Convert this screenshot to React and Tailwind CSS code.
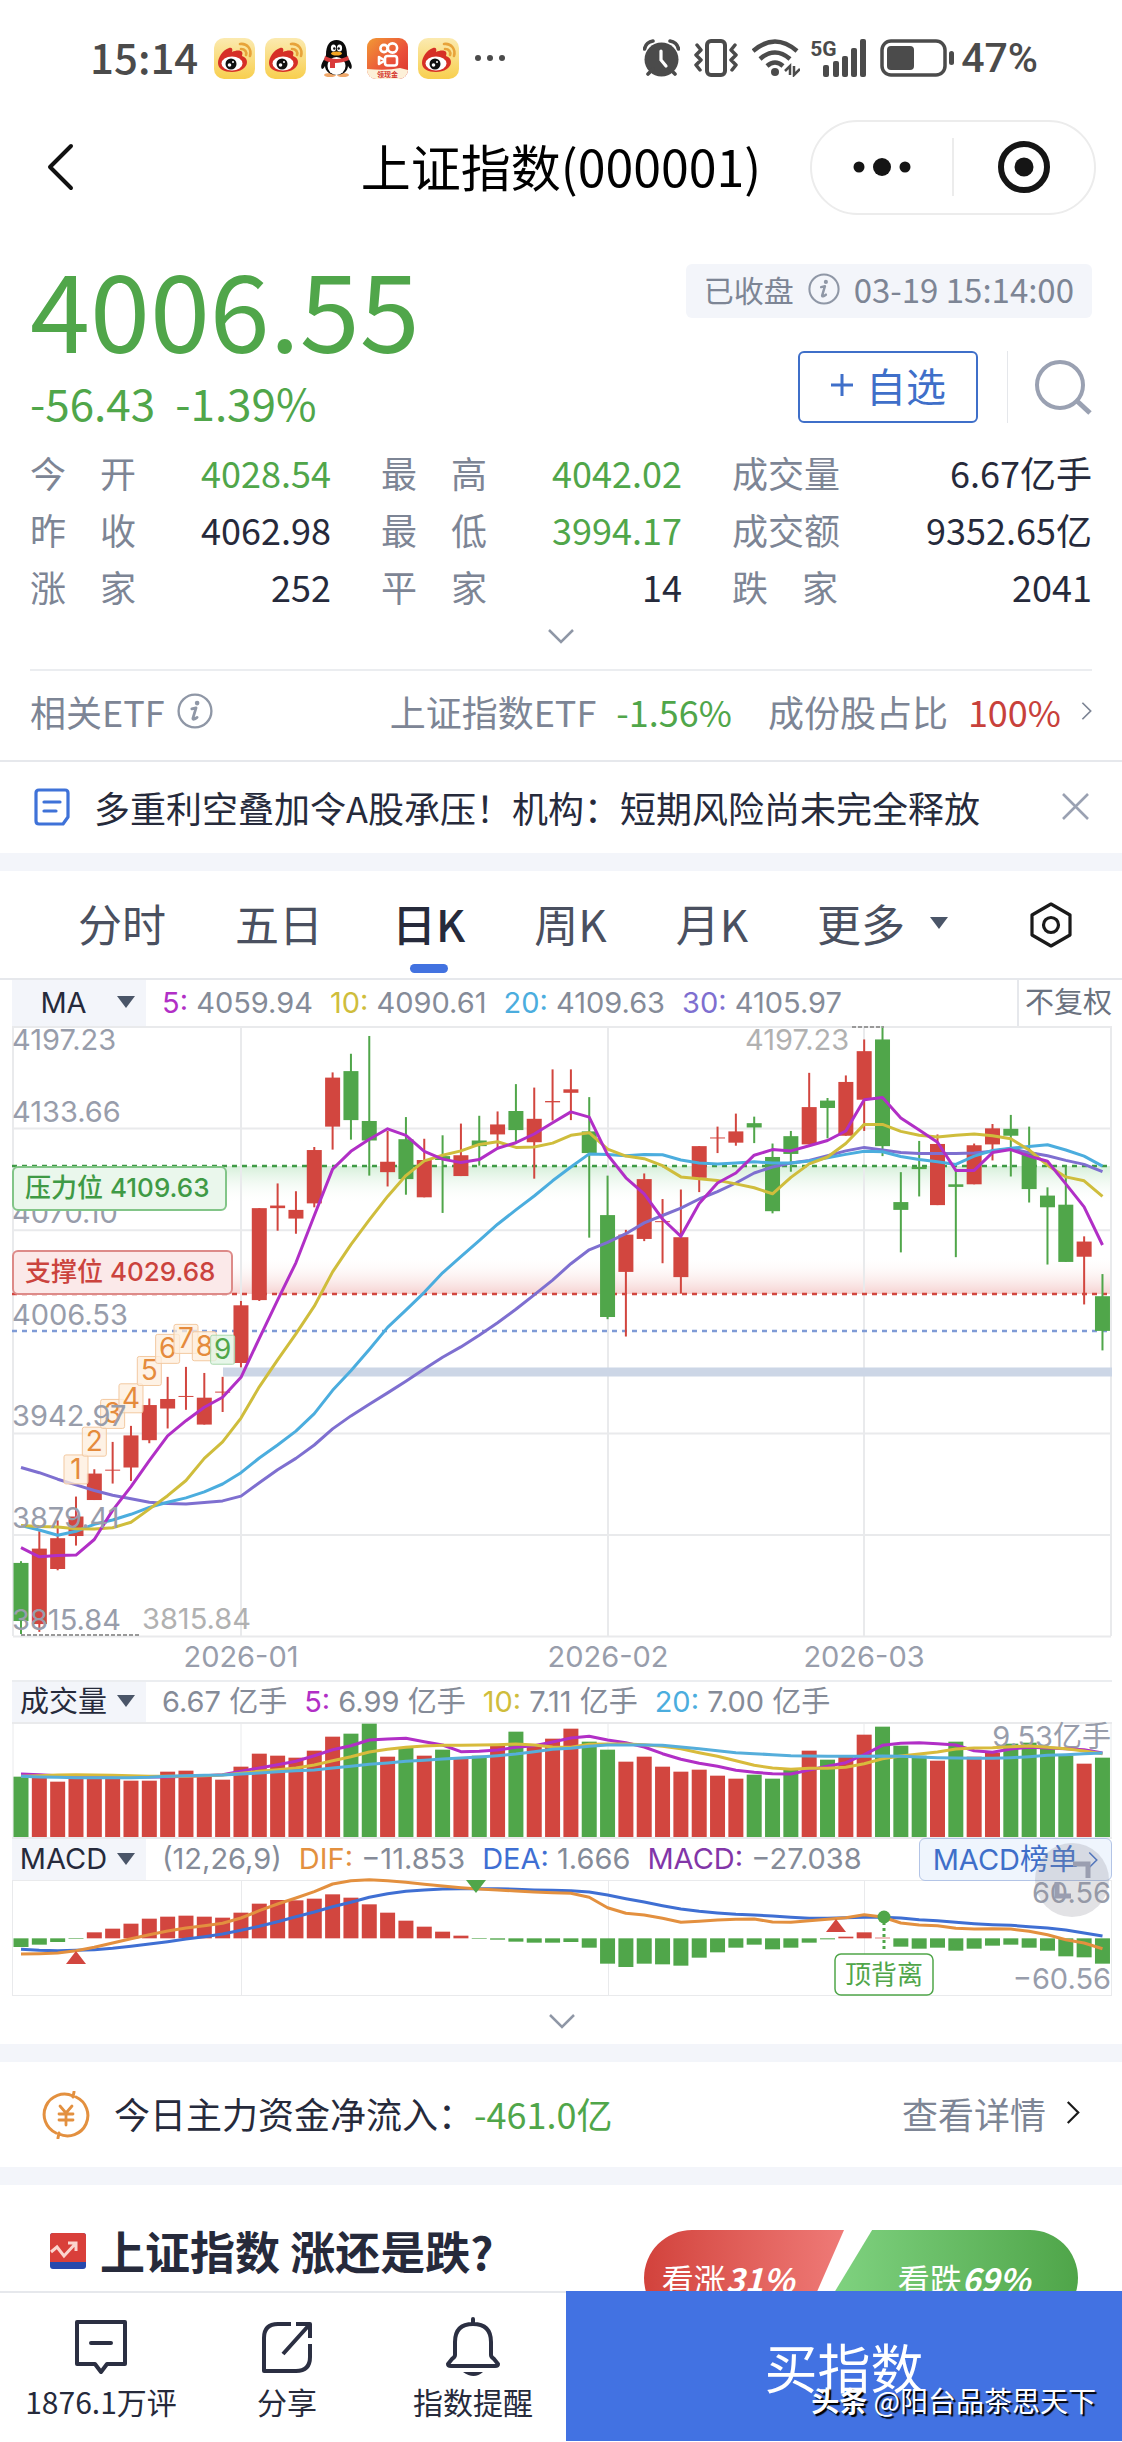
import React, { useState } from "react";

const RED = "#d2463f";
const GREEN = "#50a64a";
const STEP = 18.33;

// [up, high, top, bottom, low], measured on the price axis from top to bottom
const candles = [
  [0, 1272, 1276, 1410, 1440], [1, 1203, 1243, 1417, 1435], [1, 1178, 1219, 1290, 1293],
  [1, 1123, 1169, 1214, 1236], [1, 1060, 1070, 1131, 1131], [1, 997, 1061, 1063, 1093],
  [1, 960, 982, 1056, 1087], [1, 897, 912, 993, 1000], [1, 847, 898, 920, 966],
  [1, 824, 891, 893, 923], [1, 838, 895, 957, 957], [1, 847, 881, 883, 928],
  [1, 672, 682, 815, 825], [1, 458, 458, 670, 672], [1, 401, 452, 458, 510],
  [1, 419, 462, 482, 517], [1, 317, 324, 447, 456], [1, 145, 157, 270, 323],
  [0, 102, 142, 255, 300], [0, 61, 257, 302, 383], [1, 280, 351, 375, 408],
  [0, 248, 299, 391, 427], [1, 298, 347, 433, 433], [0, 290, 338, 347, 469],
  [1, 263, 336, 384, 384], [0, 245, 302, 315, 360], [1, 235, 265, 288, 322],
  [0, 172, 234, 278, 310], [1, 180, 252, 306, 390], [1, 138, 211, 214, 256],
  [1, 138, 184, 192, 255], [0, 202, 281, 331, 526], [0, 383, 474, 709, 714],
  [1, 508, 519, 605, 754], [1, 378, 391, 529, 534], [1, 437, 488, 490, 585],
  [1, 415, 525, 617, 655], [1, 315, 315, 388, 421], [1, 270, 295, 297, 331],
  [1, 240, 281, 307, 314], [0, 247, 262, 272, 308], [0, 309, 340, 465, 470],
  [0, 280, 292, 333, 374], [1, 146, 225, 311, 311], [0, 204, 210, 227, 297],
  [1, 152, 167, 291, 291], [1, 69, 96, 208, 280], [0, 38, 69, 315, 338],
  [0, 375, 444, 462, 560], [0, 303, 363, 368, 431], [1, 288, 310, 451, 451],
  [0, 370, 403, 409, 571], [1, 309, 313, 403, 403], [1, 264, 274, 311, 348],
  [0, 243, 275, 291, 385], [0, 270, 330, 414, 445], [0, 410, 429, 456, 588],
  [0, 362, 450, 582, 582], [1, 523, 535, 570, 680], [0, 610, 661, 741, 786],
];

const ma5 = [1241, 1262, 1259, 1258, 1222, 1155, 1100, 1040, 983, 948, 917, 894, 848, 758, 670, 584, 475, 368, 327, 299, 275, 290, 327, 345, 353, 346, 320, 307, 287, 261, 236, 248, 335, 388, 425, 483, 523, 447, 400, 377, 336, 323, 326, 314, 302, 280, 208, 203, 250, 278, 306, 371, 371, 330, 323, 338, 350, 402, 455, 543];
const ma10 = [1190, 1192, 1193, 1197, 1198, 1195, 1182, 1152, 1121, 1086, 1035, 997, 942, 870, 808, 748, 684, 605, 542, 485, 431, 383, 349, 336, 326, 311, 305, 318, 317, 308, 290, 284, 322, 338, 344, 360, 386, 390, 394, 402, 411, 425, 387, 356, 340, 309, 265, 265, 281, 290, 294, 290, 287, 291, 298, 324, 359, 386, 395, 431];
const ma20 = [1190, 1200, 1212, 1203, 1187, 1177, 1164, 1148, 1136, 1126, 1112, 1094, 1068, 1034, 1004, 972, 932, 878, 833, 784, 733, 693, 652, 607, 570, 533, 495, 462, 430, 395, 363, 333, 334, 337, 334, 335, 347, 354, 356, 354, 351, 354, 354, 349, 342, 334, 327, 328, 339, 346, 351, 357, 338, 325, 320, 316, 312, 324, 338, 361];
const ma30 = [1056, 1068, 1083, 1096, 1109, 1120, 1128, 1136, 1139, 1140, 1137, 1133, 1122, 1091, 1061, 1035, 1004, 967, 937, 910, 884, 857, 829, 802, 778, 751, 722, 691, 658, 624, 586, 554, 537, 517, 492, 475, 458, 437, 420, 400, 377, 363, 354, 348, 337, 326, 318, 324, 330, 332, 332, 332, 331, 327, 321, 330, 337, 348, 357, 374];

const vols = [351, 355, 366, 357, 353, 357, 363, 363, 336, 333, 351, 360, 321, 282, 288, 294, 273, 231, 222, 192, 291, 264, 288, 270, 297, 288, 258, 216, 258, 237, 207, 246, 270, 306, 291, 321, 336, 330, 348, 357, 345, 357, 330, 273, 300, 291, 225, 201, 258, 288, 303, 246, 291, 279, 252, 249, 267, 288, 312, 294];
const vol5 = [343, 345, 348, 350, 352, 353, 352, 352, 352, 350, 348, 345, 335, 325, 315, 305, 288, 270, 258, 241, 238, 236, 246, 256, 276, 275, 271, 263, 258, 247, 235, 230, 241, 249, 262, 282, 299, 311, 320, 332, 338, 342, 343, 331, 320, 309, 285, 257, 251, 249, 252, 256, 273, 278, 268, 263, 265, 267, 270, 280];
const vol10 = [350, 348, 346, 345, 346, 347, 348, 350, 350, 350, 348, 346, 341, 335, 330, 325, 316, 303, 291, 277, 269, 263, 259, 257, 257, 256, 255, 253, 256, 262, 263, 254, 253, 253, 255, 260, 267, 279, 290, 303, 317, 325, 329, 326, 326, 323, 312, 297, 289, 283, 277, 268, 265, 264, 261, 259, 263, 267, 274, 282];
const vol20 = [350, 352, 353, 354, 354, 354, 354, 353, 350, 348, 347, 346, 343, 340, 336, 333, 331, 325, 320, 314, 310, 305, 302, 298, 295, 292, 288, 283, 276, 269, 266, 260, 256, 256, 256, 257, 262, 267, 273, 279, 282, 285, 288, 289, 290, 290, 290, 289, 290, 292, 294, 295, 296, 296, 294, 291, 287, 285, 282, 280];

const macd = [862, 855, 847, 836, 818, 807, 792, 777, 771, 768, 771, 774, 759, 732, 721, 722, 717, 704, 714, 734, 759, 783, 801, 816, 828, 837, 840, 846, 849, 849, 847, 864, 912, 922, 912, 914, 918, 894, 878, 864, 855, 869, 864, 849, 839, 831, 818, 834, 861, 867, 864, 873, 867, 858, 855, 864, 873, 890, 893, 912];
const dif = [883, 882, 880, 873, 863, 850, 837, 825, 814, 805, 798, 791, 775, 753, 733, 715, 696, 673, 663, 660, 663, 668, 674, 679, 684, 688, 691, 694, 697, 699, 701, 713, 744, 761, 766, 776, 788, 785, 781, 779, 778, 787, 788, 783, 779, 774, 765, 772, 790, 796, 798, 806, 808, 807, 808, 815, 825, 840, 850, 867];
const dea = [869, 872, 873, 872, 870, 866, 860, 853, 846, 838, 831, 823, 812, 800, 786, 771, 757, 741, 728, 713, 702, 695, 691, 688, 687, 687, 687, 689, 691, 692, 693, 697, 706, 717, 727, 738, 748, 755, 760, 764, 766, 769, 773, 776, 776, 774, 773, 773, 775, 780, 783, 788, 792, 795, 797, 801, 805, 811, 820, 829];

// nine-turn markers above the candles
const turns = [1027, 963, 899, 863, 800, 749, 726, 743, 751];

const priceLabels = ["4197.23", "4133.66", "4070.10", "4006.53", "3942.97", "3879.41", "3815.84"];
const months = [
  { x: 229, name: "2026-01" },
  { x: 596, name: "2026-02" },
  { x: 852, name: "2026-03" },
];

const stats = [
  ["今开", "4028.54", "text-[#50a64a]"],
  ["最高", "4042.02", "text-[#50a64a]"],
  ["成交量", "6.67亿手", "text-[#262a3b]"],
  ["昨收", "4062.98", "text-[#262a3b]"],
  ["最低", "3994.17", "text-[#50a64a]"],
  ["成交额", "9352.65亿", "text-[#262a3b]"],
  ["涨家", "252", "text-[#262a3b]"],
  ["平家", "14", "text-[#262a3b]"],
  ["跌家", "2041", "text-[#262a3b]"],
];

const cx = (i) => 9 + i * STEP;
const py = (v) => (v - 38) * 0.4337;
const vy = (v) => (v - 187) / 3;
const my = (v) => (v - 661) / 3;
const line = (arr, fn) => arr.map((v, i) => `${cx(i).toFixed(1)},${fn(v).toFixed(1)}`).join(" ");

function WeiboIcon() {
  return (
    <svg className="w-[41px] h-[41px]" viewBox="0 0 41 41">
      <defs>
        <linearGradient id="wb" x1="0" y1="0" x2="0" y2="1">
          <stop offset="0" stopColor="#fbeab0" />
          <stop offset="1" stopColor="#f8cf4e" />
        </linearGradient>
      </defs>
      <rect width="41" height="41" rx="10" fill="url(#wb)" />
      <path d="M4 25c0-6 5-13 11-15 3-1 4 1 3 4 4-2 9-2 10 0 1 1 0 3 0 4 3 1 5 3 5 6 0 6-7 10-15 10S4 31 4 25z" fill="#d62f26" />
      <ellipse cx="18" cy="25.500" rx="10.500" ry="7" fill="#fff" />
      <circle cx="17" cy="26" r="5.500" fill="#111" />
      <circle cx="15.500" cy="27" r="1.800" fill="#fff" />
      <circle cx="19" cy="24" r="1" fill="#fff" />
      <path d="M26 6c7-1 12 5 10 12M27 11c4 0 6 3 5 6" fill="none" stroke="#e7a33a" strokeWidth="2.600" strokeLinecap="round" />
    </svg>
  );
}

function QQIcon() {
  return (
    <svg className="w-[41px] h-[41px]" viewBox="0 0 41 41">
      <ellipse cx="14" cy="37" rx="6" ry="2" fill="#f0a86a" />
      <ellipse cx="27" cy="37" rx="6" ry="2" fill="#f0a86a" />
      <path d="M10 17C10 7 14 2 20.500 2S31 7 31 17l1 3c3 4 5 9 3 11-1 0-2-1-3-3 0 5-5 9-11.500 9S9 33 9 28c-1 2-2 3-3 3-2-2 0-7 3-11z" fill="#0b0b0b" />
      <ellipse cx="20.500" cy="28" rx="9" ry="9" fill="#fff" />
      <ellipse cx="17.500" cy="10" rx="2.600" ry="3.600" fill="#fff" />
      <ellipse cx="23.500" cy="10" rx="2.600" ry="3.600" fill="#fff" />
      <circle cx="18.300" cy="10.500" r="1.200" fill="#111" />
      <circle cx="22.700" cy="10.500" r="1.200" fill="#111" />
      <ellipse cx="20.500" cy="15.500" rx="5.500" ry="2" fill="#f5a623" />
      <path d="M9 18c7 4 16 4 23 0l1 4c-4 2-10 3-14 3v5h-5v-6c-2 0-4-1-6-2z" fill="#d93a3a" />
    </svg>
  );
}

function KuaishouIcon() {
  return (
    <svg className="w-[41px] h-[41px]" viewBox="0 0 41 41">
      <defs>
        <linearGradient id="ks" x1="0" y1="0" x2="1" y2="1">
          <stop offset="0" stopColor="#f29a35" />
          <stop offset=".6" stopColor="#ea4f3a" />
          <stop offset="1" stopColor="#d8362e" />
        </linearGradient>
        <clipPath id="ksc">
          <rect width="41" height="41" rx="9" />
        </clipPath>
      </defs>
      <g clipPath="url(#ksc)">
        <rect width="41" height="41" fill="url(#ks)" />
        <g fill="none" stroke="#fff" strokeWidth="2.600">
          <circle cx="17" cy="10.500" r="3.600" />
          <circle cx="25.500" cy="10" r="4.600" />
          <rect x="18" y="18" width="12" height="9.500" rx="2.500" />
          <path d="M17 22l-5-3v7l5-3z" strokeLinejoin="round" />
        </g>
        <path d="M0 31q20 2 33-1l8 2v9H0z" fill="#fdf0d8" />
        <text x="10" y="39" fontSize="7" fontWeight="700" fill="#d5362e">领现金</text>
      </g>
    </svg>
  );
}

function StatusBar() {
  return (
    <header className="h-[116px] pl-[90px] pr-[84px] flex items-center text-[#4b4b4b]">
      <span className="text-[42px] leading-none pb-1 font-medium">15:14</span>
      <div className="flex items-center gap-[10px] ml-4">
        <WeiboIcon />
        <WeiboIcon />
        <QQIcon />
        <KuaishouIcon />
        <WeiboIcon />
      </div>
      <svg className="w-[30px] h-[6px] ml-4" viewBox="0 0 30 6" fill="#4b4b4b">
        <circle cx="3" cy="3" r="3" />
        <circle cx="15" cy="3" r="3" />
        <circle cx="27" cy="3" r="3" />
      </svg>
      <div className="ml-auto flex items-center">
        <svg className="w-[37px] h-[38px]" viewBox="0 0 37 38">
          <circle cx="18.500" cy="20.500" r="17" fill="#4b4b4b" />
          <path d="M1.500 10Q3 3 10 2M35.500 10Q34 3 27 2M5 35l5-5M32 35l-5-5" stroke="#4b4b4b" strokeWidth="3.600" strokeLinecap="round" fill="none" />
          <path d="M18 12v9l5 6" stroke="#fff" strokeWidth="3.200" strokeLinecap="round" fill="none" />
        </svg>
        <svg className="w-[44px] h-[38px] ml-3.5" viewBox="0 0 44 38" fill="none" stroke="#4b4b4b" strokeLinejoin="round" strokeLinecap="round">
          <rect x="13" y="2" width="18" height="34" rx="4" strokeWidth="4" />
          <path d="M3 6l4 5-5 5 5 5-5 5 4 5M41 6l-4 5 5 5-5 5 5 5-4 5" strokeWidth="3.500" />
        </svg>
        <svg className="w-[48px] h-[38px] ml-3.5" viewBox="0 0 48 38" fill="none" stroke="#4b4b4b" strokeLinecap="butt">
          <path d="M1 12Q23-7 45 12" strokeWidth="4.500" />
          <path d="M8 20Q23 7 38 20" strokeWidth="4.500" />
          <path d="M15 27q8-7 16 0" strokeWidth="4.500" />
          <circle cx="23" cy="33" r="4" fill="#4b4b4b" stroke="none" />
          <path d="M33 32l5-5v9M42 27v9l6-6" strokeWidth="2.500" />
        </svg>
        <div className="relative ml-2.5">
          <span className="absolute left-0 top-0 text-[21px] leading-none font-bold font-['Roboto',sans-serif]">5G</span>
          <svg className="w-[56px] h-[38px]" viewBox="0 0 56 38" fill="#4b4b4b">
            <rect x="13" y="26" width="6" height="12" rx="2" />
            <rect x="23" y="22" width="6" height="16" rx="2" />
            <rect x="32" y="17" width="6" height="21" rx="2" />
            <rect x="41" y="9" width="6" height="29" rx="2" />
            <rect x="50" y="0" width="6" height="38" rx="2" />
          </svg>
        </div>
        <svg className="w-[75px] h-[38px] ml-3.5" viewBox="0 0 75 38">
          <rect x="2" y="2" width="63" height="34" rx="9" fill="none" stroke="#4b4b4b" strokeWidth="3.500" />
          <rect x="7" y="7" width="27" height="24" rx="4" fill="#4b4b4b" />
          <rect x="69" y="12" width="5" height="14" rx="2.500" fill="#4b4b4b" />
        </svg>
        <span className="ml-1.5 text-[41px] leading-none font-medium font-['Roboto',sans-serif]">47%</span>
      </div>
    </header>
  );
}

function NavBar() {
  return (
    <nav className="h-[102px] px-[26px] grid grid-cols-[1fr_auto_1fr] items-center">
      <button aria-label="返回" className="justify-self-start ml-5">
        <svg className="w-[28px] h-[48px]" viewBox="0 0 28 48" fill="none" stroke="#111" strokeWidth="4" strokeLinecap="round" strokeLinejoin="round">
          <path d="M25 3L4 24l21 21" />
        </svg>
      </button>
      <h1 className="pb-1 text-[50px] leading-[60px] text-black">上证指数(000001)</h1>
      <div className="justify-self-end w-[286px] h-[95px] rounded-full border-2 border-[#ececec] flex items-center">
        <button aria-label="更多" className="flex-1 flex justify-center">
          <svg className="w-[58px] h-[20px]" viewBox="0 0 58 20" fill="#151515">
            <circle cx="6" cy="10" r="5.500" />
            <circle cx="29" cy="10" r="9" />
            <circle cx="52" cy="10" r="5.500" />
          </svg>
        </button>
        <span className="w-0.5 h-[58px] bg-[#ececec]" />
        <button aria-label="关闭" className="flex-1 flex justify-center">
          <svg className="w-[54px] h-[54px]" viewBox="0 0 54 54">
            <circle cx="27" cy="27" r="23" fill="none" stroke="#151515" strokeWidth="6" />
            <circle cx="27" cy="27" r="9.500" fill="#151515" />
          </svg>
        </button>
      </div>
    </nav>
  );
}

function InfoIcon({ className }) {
  return (
    <svg className={className} viewBox="0 0 34 34">
      <circle cx="17" cy="17" r="15.500" fill="none" stroke="#8f97a6" strokeWidth="2.200" />
      <circle cx="19" cy="9.500" r="2.200" fill="#8f97a6" />
      <path d="M14 15l4-1-3 10q0 2 4-1" fill="none" stroke="#8f97a6" strokeWidth="2.600" strokeLinecap="round" strokeLinejoin="round" />
    </svg>
  );
}

function Chevron({ className, down }) {
  return (
    <svg className={className} viewBox={down ? "0 0 28 16" : "0 0 16 28"} fill="none" stroke="currentColor" strokeWidth="2.500">
      <path d={down ? "M2 2l12 12L26 2" : "M2 2l12 12L2 26"} />
    </svg>
  );
}

function Quote() {
  return (
    <section className="px-[30px] pt-10">
      <div className="flex justify-between">
        <div className="text-[#50a64a]">
          <p className="text-[108px] leading-[96px]">4006.55</p>
          <p className="mt-6 text-[44px] leading-[48px] flex gap-5">
            <span>-56.43</span>
            <span>-1.39%</span>
          </p>
        </div>
        <div className="pt-1.5 flex flex-col items-end">
          <div className="h-[54px] px-[18px] pb-1 rounded-md bg-[#f3f5fa] flex items-center gap-[14px] text-[#7d8595]">
            <span className="text-[30px] leading-none">已收盘</span>
            <InfoIcon className="w-[32px] h-[32px]" />
            <span className="text-[33px] leading-none">03-19 15:14:00</span>
          </div>
          <div className="mt-[33px] flex items-center">
            <button className="w-[180px] h-[72px] pb-1 rounded-md border-2 border-[#3f6fc9] text-[#3f6fc9] text-[40px] leading-none flex items-center justify-center gap-3">
              <svg className="w-[24px] h-[24px]" viewBox="0 0 24 24" stroke="currentColor" strokeWidth="3">
                <path d="M12 1v22M1 12h22" />
              </svg>
              自选
            </button>
            <span className="ml-[29px] w-px h-[72px] bg-[#e5e7eb]" />
            <button aria-label="搜索" className="ml-[26px]">
              <svg className="w-[58px] h-[56px]" viewBox="0 0 58 56" fill="none" stroke="#9aa1b2" strokeWidth="4">
                <circle cx="26" cy="26" r="23" />
                <path d="M43 42l13 12" strokeWidth="5" />
              </svg>
            </button>
          </div>
        </div>
      </div>
      <dl className="mt-[18px] grid grid-cols-[301fr_301fr_360fr] gap-x-[50px] text-[36px] leading-[57px]">
        {stats.map(([name, value, color]) => (
          <div key={name} className="flex justify-between whitespace-nowrap">
            <dt className="w-[106px] flex justify-between text-[#7d8595]">
              {name.split("").map((c, i) => (
                <span key={i}>{c}</span>
              ))}
            </dt>
            <dd className={color}>{value}</dd>
          </div>
        ))}
      </dl>
      <button aria-label="展开" className="mx-auto h-[42px] flex items-center text-[#8f97a6]">
        <Chevron down className="w-[28px] h-[16px]" />
      </button>
      <div className="mt-3 pb-2.5 h-[91px] border-t-2 border-[#ebedf0] flex items-center text-[36px] text-[#7d8595] whitespace-nowrap">
        <span>相关ETF</span>
        <InfoIcon className="w-[36px] h-[36px] ml-3" />
        <span className="ml-auto">上证指数ETF</span>
        <span className="ml-5 text-[#50a64a]">-1.56%</span>
        <span className="ml-9">成份股占比</span>
        <span className="ml-5 text-[#c8413b]">100%</span>
        <Chevron className="ml-5 w-[11px] h-[22px]" />
      </div>
    </section>
  );
}

function News() {
  return (
    <section className="h-[93px] pl-[34px] pr-[33px] pb-0.5 border-t-2 border-[#e6e8ec] flex items-center">
      <svg className="w-[36px] h-[38px]" viewBox="0 0 36 38" fill="none" stroke="#3f72d8" strokeWidth="3.200">
        <path d="M5 2h26q3 0 3 3v24l-5 7H5q-3 0-3-3V5q0-3 3-3z" strokeLinejoin="round" />
        <path d="M10 14h16M10 23h12" strokeLinecap="round" />
      </svg>
      <a href="#news" className="ml-6 text-[36px] leading-none text-[#262a3b] whitespace-nowrap">
        多重利空叠加令A股承压！机构：短期风险尚未完全释放
      </a>
      <button aria-label="关闭资讯" className="ml-auto">
        <svg className="w-[27px] h-[27px]" viewBox="0 0 27 27" stroke="#9aa1b2" strokeWidth="2.600">
          <path d="M1 1l25 25M26 1L1 26" />
        </svg>
      </button>
    </section>
  );
}

function Caret({ className = "w-[18px] h-[12px]" }) {
  return (
    <svg className={className} viewBox="0 0 18 12" fill="#4a5568">
      <path d="M0 0h18L9 12z" />
    </svg>
  );
}

function Tabs() {
  const [tab, setTab] = useState("日K");
  return (
    <div className="h-[109px] pl-[78px] pr-[50px] border-b-2 border-[#e6e8ec] flex items-center">
      <div className="flex items-center gap-[69px] text-[44px] leading-[104px] pb-[3px] text-[#4a5060] whitespace-nowrap">
        {["分时", "五日", "日K", "周K", "月K"].map((t) => (
          <button key={t} onClick={() => setTab(t)} className={t === tab ? "relative font-medium text-[#262a3b]" : "relative"}>
            {t}
            {t === tab && <span className="absolute left-1/2 -translate-x-1/2 bottom-0.5 w-[38px] h-[9px] rounded-full bg-[#4272e0]" />}
          </button>
        ))}
        <button className="flex items-center gap-6">
          更多
          <Caret className="w-[20px] h-[12px]" />
        </button>
      </div>
      <button aria-label="设置" className="ml-auto">
        <svg className="w-[42px] h-[46px]" viewBox="0 0 42 46" fill="none" stroke="#1a1a1a" strokeWidth="3.200">
          <path d="M21 2l19 11v20L21 44 2 33V13z" strokeLinejoin="round" />
          <circle cx="21" cy="23" r="7.500" />
        </svg>
      </button>
    </div>
  );
}

function Legend({ name, items, children }) {
  return (
    <div className="flex items-center h-full text-[29px] leading-none whitespace-nowrap text-[#858b98]">
      <button className="w-[134px] h-full pb-0.5 bg-[#f3f5fa] flex items-center justify-end gap-2 pl-1.5 pr-[11px] text-[#262a3b]">
        <span className="flex-1 text-center">{name}</span>
        <Caret />
      </button>
      <div className="ml-4 pb-0.5 flex gap-[17px]">
        {items.map(([key, value, color]) => (
          <span key={value}>
            {key && <span className={color}>{key}: </span>}
            {value}
          </span>
        ))}
      </div>
      {children}
    </div>
  );
}

function PriceChart() {
  return (
    <svg className="block w-full overflow-visible" viewBox="0 0 1100 654" fontSize="29">
      <defs>
        <linearGradient id="gg" x1="0" y1="0" x2="0" y2="1">
          <stop offset="0" stopColor="#d5efd9" />
          <stop offset="1" stopColor="#fff" stopOpacity="0" />
        </linearGradient>
        <linearGradient id="rg" x1="0" y1="1" x2="0" y2="0">
          <stop offset="0" stopColor="#f6d2d1" />
          <stop offset="1" stopColor="#fff" stopOpacity="0" />
        </linearGradient>
      </defs>
      <rect x="214" y="140" width="886" height="38" fill="url(#gg)" />
      <rect x="214" y="230" width="886" height="38" fill="url(#rg)" />
      <g stroke="#e9eaec" strokeWidth="2">
        {priceLabels.map((p, i) => i !== 3 && <path key={p} d={`M1 ${1 + i * 101.6}H1099`} />)}
        {months.map((m) => <path key={m.name} d={`M${m.x} 0V610`} />)}
        <path d="M1 0V610M1099 0V610" />
      </g>
      <path d="M211 346H1100" stroke="#ccd6e6" strokeWidth="9" />
      <path d="M0 305H1100" stroke="#7f9bd6" strokeWidth="2.500" strokeDasharray="5 5" />
      <path d="M0 140H1100" stroke="#3f9a45" strokeWidth="2.500" strokeDasharray="5 5" />
      <path d="M0 268H1100" stroke="#d2463f" strokeWidth="2.500" strokeDasharray="5 5" />
      {candles.map(([up, high, top, bottom, low], i) => (
        <g key={i} fill={up ? RED : GREEN}>
          <rect x={cx(i) - 1} y={py(high)} width="2" height={py(low) - py(high)} />
          <rect x={cx(i) - 7.5} y={py(top)} width="15" height={Math.max(1, py(bottom) - py(top))} />
        </g>
      ))}
      <g fill="none" strokeWidth="3" strokeLinejoin="round">
        <polyline points={line(ma30, py)} stroke="#7e6fd0" />
        <polyline points={line(ma20, py)} stroke="#4badde" />
        <polyline points={line(ma10, py)} stroke="#cfbd3c" />
        <polyline points={line(ma5, py)} stroke="#b12fc6" />
      </g>
      {turns.map((t, i) => (
        <g key={i}>
          <rect x={cx(i + 3) - 12} y={py(t)} width="24" height="29" rx="2" fill={i === 8 ? "#dff3e1" : "#fdeddc"} fillOpacity=".75" stroke={i === 8 ? "#a9d9ae" : "#f3c9a0"} />
          <text x={cx(i + 3)} y={py(t) + 24} fontSize="28" textAnchor="middle" fill={i === 8 ? "#50a64a" : "#e58b3c"}>{i + 1}</text>
        </g>
      ))}
      <g fill="#989dab">
        {priceLabels.map((p, i) => (
          <text key={p} x="0" y={i ? 101.6 * i - 6 : 24}>{p}</text>
        ))}
      </g>
      <g fill="#b1b1b1">
        <text x="130" y="603">3815.84</text>
        <text x="733" y="24">4197.23</text>
      </g>
      <path d="M9 609H129M840 1H872" stroke="#999" strokeWidth="2" strokeDasharray="4 2" />
      <g strokeWidth="2">
        <rect x="1" y="141" width="213" height="43" rx="5" fill="#eaf7ec" stroke="#82c588" />
        <rect x="1" y="225" width="219" height="43" rx="5" fill="#fbe9e9" stroke="#dd8a88" />
      </g>
      <g fontSize="26" fontWeight="500">
        <text x="13" y="171" fill="#3f9a45">压力位 4109.63</text>
        <text x="13" y="255" fill="#cb433d">支撑位 4029.68</text>
      </g>
      <g fill="#989dab" textAnchor="middle">
        {months.map((m) => <text key={m.name} x={m.x} y="641">{m.name}</text>)}
      </g>
    </svg>
  );
}

function VolumeChart() {
  return (
    <svg className="block w-full overflow-visible" viewBox="0 0 1100 117" fontSize="29">
      <g stroke="#e9eaec">
        <path d="M0 1H1100M0 116H1100" strokeWidth="2" />
        <path d="M1 0V116M1099 0V116M229 0V116M596 0V116M852 0V116" />
      </g>
      {vols.map((v, i) => (
        <rect key={i} x={cx(i) - 7.5} y={vy(v)} width="15" height={115 - vy(v)} fill={candles[i][0] ? RED : GREEN} />
      ))}
      <text x="1099" y="25" textAnchor="end" fill="#989dab">9.53亿手</text>
      <g fill="none" strokeWidth="3" strokeLinejoin="round">
        <polyline points={line(vol5, vy)} stroke="#b12fc6" />
        <polyline points={line(vol10, vy)} stroke="#d8bb3c" />
        <polyline points={line(vol20, vy)} stroke="#56aedb" />
      </g>
    </svg>
  );
}

function MacdChart() {
  return (
    <svg className="block w-full overflow-visible" viewBox="0 0 1100 117" fontSize="29">
      <path d="M0 .5H1100M0 115.500H1100M.5 0V116M1099.500 0V116M229.500 0V116M596.500 0V116M852.500 0V116" stroke="#e9eaec" fill="none" />
      {macd.map((v, i) => {
        const y = my(v);
        const zero = my(836);
        return (
          <rect key={i} x={cx(i) - 7.5} y={Math.min(y, zero)} width="15" height={Math.max(0.6, Math.abs(y - zero))} fill={y < zero ? RED : GREEN} />
        );
      })}
      <g fill="none" strokeWidth="3" strokeLinejoin="round">
        <polyline points={line(dea, my)} stroke="#3f6fd3" />
        <polyline points={line(dif, my)} stroke="#e3903f" />
      </g>
      <path d="M64 71l10 13H54z" fill={RED} />
      <path d="M824 39l10 13h-20z" fill={RED} />
      <path d="M464 13l10-13h-20z" fill={GREEN} />
      <circle cx="872" cy="37" r="6.500" fill={GREEN} />
      <path d="M872 42V70" stroke={GREEN} strokeWidth="3" strokeDasharray="3 3" />
      <rect x="823" y="74" width="98" height="41" rx="6" fill="#fff" stroke={GREEN} strokeWidth="1.500" />
      <text x="872" y="104" fontSize="26" textAnchor="middle" fill={GREEN}>顶背离</text>
      <g fill="#989dab" textAnchor="end">
        <text x="1099" y="23">60.56</text>
        <text x="1099" y="109">−60.56</text>
      </g>
    </svg>
  );
}

function Charts() {
  return (
    <section className="pl-3 pr-[10px] font-['Inter','Noto_Sans_CJK_SC',sans-serif]">
      <div className="h-[46px]">
        <Legend
          name="MA"
          items={[
            ["5", "4059.94", "text-[#b12fc6]"],
            ["10", "4090.61", "text-[#cfbd3c]"],
            ["20", "4109.63", "text-[#4badde]"],
            ["30", "4105.97", "text-[#7e6fd0]"],
          ]}
        >
          <button className="ml-auto h-full pl-1.5 pb-0.5 border-l-2 border-[#e6e8ec] text-[#6b7280]">不复权</button>
        </Legend>
      </div>
      <PriceChart />
      <div className="h-[42px] border-t-2 border-[#ebedf0]">
        <Legend
          name="成交量"
          items={[
            ["", "6.67 亿手", ""],
            ["5", "6.99 亿手", "text-[#b12fc6]"],
            ["10", "7.11 亿手", "text-[#cfbd3c]"],
            ["20", "7.00 亿手", "text-[#4badde]"],
          ]}
        />
      </div>
      <VolumeChart />
      <div className="h-[41px] relative">
        <Legend
          name="MACD"
          items={[
            ["", "(12,26,9)", ""],
            ["DIF", "−11.853", "text-[#e3903f]"],
            ["DEA", "1.666", "text-[#3f6fd3]"],
            ["MACD", "−27.038", "text-[#8236a8]"],
          ]}
        >
          <a href="#macd" className="ml-auto h-[43px] px-[13px] rounded-md border border-[#b3c4e6] bg-[#eff5fd] text-[#3f6fc9] flex items-center gap-2.5">
            MACD榜单
            <Chevron className="w-[10px] h-[18px]" />
          </a>
        </Legend>
        <button aria-label="全屏" className="absolute right-[3px] top-[4px] w-[74px] h-[74px] rounded-full bg-[#8c8c96]/25 flex items-center justify-center">
          <svg className="w-[38px] h-[38px]" viewBox="0 0 38 38" fill="none" stroke="#9a9eb0" strokeWidth="5">
            <path d="M20 3h15v14M18 35H4V21" />
          </svg>
        </button>
      </div>
      <MacdChart />
      <button aria-label="展开指标" className="mx-auto h-[47px] flex items-center text-[#8f97a6]">
        <Chevron down className="w-[30px] h-[16px]" />
      </button>
    </section>
  );
}

function FundFlow() {
  return (
    <section className="h-[105px] pl-[42px] pr-[42px] flex items-center text-[36px] leading-none whitespace-nowrap">
      <svg className="w-[48px] h-[48px]" viewBox="0 0 48 48" fill="none" stroke="#e3903f" strokeWidth="3" strokeLinecap="round">
        <path d="M14 42A20 20 0 0 1 31 5M34 6A20 20 0 0 1 17 43M32 1l-1 5M16 47l1-5" />
        <path d="M18 15l6 7 6-7M17 23h14M17 29h14M24 22v12" strokeWidth="2.800" />
      </svg>
      <span className="ml-[24px] pb-1 text-[#262a3b]">今日主力资金净流入：</span>
      <span className="pb-1 text-[#50a64a]">-461.0亿</span>
      <a href="#detail" className="ml-auto pb-1 flex items-center gap-5 text-[#7d8595]">
        查看详情
        <Chevron className="w-[14px] h-[25px] text-[#1a1a1a]" />
      </a>
    </section>
  );
}

function Vote() {
  return (
    <section className="h-[106px] pl-[50px] pr-[44px] flex items-start justify-between overflow-hidden">
      <h2 className="mt-[38px] flex items-center text-[45px] leading-[56px] font-bold text-[#262a3b] whitespace-nowrap">
        <svg className="w-[36px] h-[36px] mr-3.5" viewBox="0 0 36 36">
          <rect width="36" height="36" rx="3" fill="#2749ad" />
          <path d="M0 3q0-3 3-3h30q3 0 3 3v26H0z" fill="#d93f3a" />
          <path d="M1 19l6-5 7 9L26 10M18 10h8v8" fill="none" stroke="#fbd5cf" strokeWidth="3" />
        </svg>
        上证指数 涨还是跌?
      </h2>
      <div className="mt-[45px] flex text-[32px] text-white">
        <button className="w-[200px] h-[96px] pr-[32px] rounded-l-full rounded-tr-xl bg-linear-to-r from-[#d2423c] to-[#ef7a77] [clip-path:polygon(0_0,100%_0,79%_100%,0_100%)]">
          看涨<b className="italic">31%</b>
        </button>
        <button className="-ml-[30px] w-[264px] h-[96px] pl-[36px] rounded-r-full bg-linear-to-r from-[#83d684] to-[#4fa549] [clip-path:polygon(22%_0,100%_0,100%_100%,0_100%)]">
          看跌<b className="italic">69%</b>
        </button>
      </div>
    </section>
  );
}

function BottomBar() {
  return (
    <footer className="h-[150px] flex">
      <div className="w-[566px] pl-2 border-t-2 border-[#e6e8ec] flex text-[30px] leading-[36px] text-[#262a3b]">
        <button className="flex-1 pt-6 flex flex-col items-center whitespace-nowrap">
          <svg className="w-[56px] h-[62px]" viewBox="0 0 56 62" fill="none" stroke="#2b2f42" strokeWidth="4" strokeLinejoin="round" strokeLinecap="round">
            <path d="M4 5h48v42H34l-6 8-6-8H4zM18 26h20" />
          </svg>
          <span className="mt-1">1876.1万评</span>
        </button>
        <button className="flex-1 pt-6 flex flex-col items-center">
          <svg className="w-[56px] h-[62px]" viewBox="0 0 56 62" fill="none" stroke="#2b2f42" strokeWidth="4" strokeLinejoin="round">
            <path d="M32 7H19Q5 7 5 21v33h32q14 0 14-14V27" />
            <path d="M37 7h14v14M51 7L24 37" />
          </svg>
          <span className="mt-1">分享</span>
        </button>
        <button className="flex-1 pt-6 flex flex-col items-center whitespace-nowrap">
          <svg className="w-[56px] h-[62px]" viewBox="0 0 56 62" fill="none" stroke="#2b2f42" strokeWidth="4" strokeLinejoin="round" strokeLinecap="round">
            <path d="M28 2v5M10 25Q10 7 28 7t18 18v13q0 2 3 4l4 5q0 2-3 2H6q-3 0-3-2l4-5q3-2 3-4z" />
            <path d="M18 55h20q-9 8-20 0z" fill="#2b2f42" stroke="none" />
          </svg>
          <span className="mt-1">指数提醒</span>
        </button>
      </div>
      <button className="relative flex-1 bg-[#4272e2] text-white text-[53px] leading-none">
        买指数
        <span className="absolute right-[26px] bottom-[26px] text-[28px] leading-[30px] whitespace-nowrap [text-shadow:2px_2px_1px_#000]">
          <b>头条</b> @阳台品茶思天下
        </span>
      </button>
    </footer>
  );
}

export default function App() {
  return (
    <div className="w-full overflow-hidden bg-white font-['Noto_Sans_CJK_SC',sans-serif]">
      <StatusBar />
      <NavBar />
      <Quote />
      <News />
      <div className="h-[18px] bg-[#f3f5fa]" />
      <Tabs />
      <Charts />
      <div className="h-[18px] bg-[#f3f5fa]" />
      <FundFlow />
      <div className="h-[18px] bg-[#f3f5fa]" />
      <Vote />
      <BottomBar />
    </div>
  );
}
